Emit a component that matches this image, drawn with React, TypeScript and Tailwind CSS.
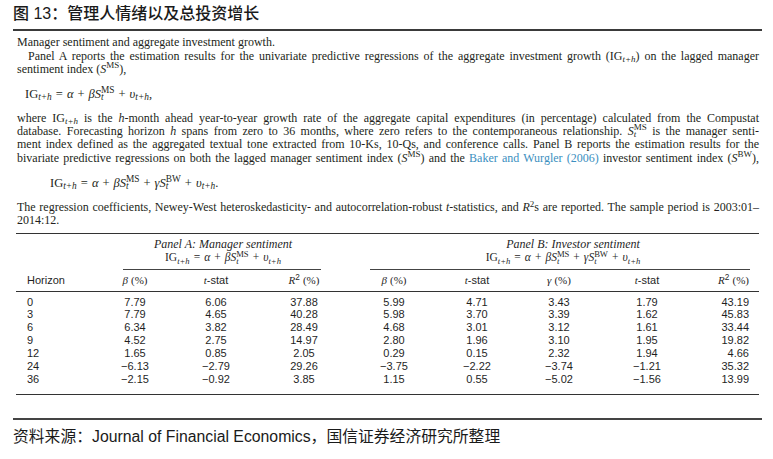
import React from "react";

const serif = "font-['Liberation_Serif','DejaVu_Serif',serif]";
const sans = "font-['Liberation_Sans',Arial,sans-serif]";
const cjk = "font-['Liberation_Sans','Noto_Sans_CJK_SC',sans-serif]";

// stacked sub + sup after a symbol, e.g. S_t^MS
function SupSub({ sup, sub }: { sup: string; sub: string }) {
  return (
    <>
      <span className="inline-block w-0">
        <sub className="italic">{sub}</sub>
      </span>
      <sup>{sup}</sup>
    </>
  );
}

const Op = ({ c }: { c: string }) => <span className="mx-[4px]">{c}</span>;

const IG = () => (
  <>
    IG<sub className="italic">t+h</sub>
  </>
);

function Eq({ bw = false, end = "" }: { bw?: boolean; end?: string }) {
  return (
    <span className="whitespace-nowrap">
      <IG />
      <Op c="=" />
      <i>α</i>
      <Op c="+" />
      <i>β</i>
      <i>S</i>
      <SupSub sup="MS" sub="t" />
      {bw && (
        <>
          <Op c="+" />
          <i>γ</i>
          <i>S</i>
          <SupSub sup="BW" sub="t" />
        </>
      )}
      <Op c="+" />
      <i>υ</i>
      <sub className="italic">t+h</sub>
      {end}
    </span>
  );
}

const Line = ({ children, full = true, className = "" }: { children: React.ReactNode; full?: boolean; className?: string }) => (
  <div
    className={`h-[13.3px] leading-[13.3px] whitespace-nowrap ${full ? "text-justify [text-align-last:justify]" : "text-left"} ${className}`}
  >
    {children}
  </div>
);

const rows = [
  ["0", "7.79", "6.06", "37.88", "5.99", "4.71", "3.43", "1.79", "43.19"],
  ["3", "7.79", "4.65", "40.28", "5.98", "3.70", "3.39", "1.62", "45.83"],
  ["6", "6.34", "3.82", "28.49", "4.68", "3.01", "3.12", "1.61", "33.44"],
  ["9", "4.52", "2.75", "14.97", "2.80", "1.96", "3.10", "1.95", "19.82"],
  ["12", "1.65", "0.85", "2.05", "0.29", "0.15", "2.32", "1.94", "4.66"],
  ["24", "−6.13", "−2.79", "29.26", "−3.75", "−2.22", "−3.74", "−1.21", "35.32"],
  ["36", "−2.15", "−0.92", "3.85", "1.15", "0.55", "−5.02", "−1.56", "13.99"],
];

const cols = "grid grid-cols-[96px_46px_116px_60px_120px_46px_118px_58px_83px]";

function cellAlign(i: number) {
  if (i === 0) return "text-left pl-[11px]";
  if (i === 8) return "text-right pr-[10px]";
  return "text-center";
}

const Gk = ({ c }: { c: string }) => <i className={serif}>{c}</i>;

const headers: React.ReactNode[] = [
  "Horizon",
  <><Gk c="β" /> <span className={serif}>(%)</span></>,
  <><Gk c="t" />-stat</>,
  <><Gk c="R" /><sup>2</sup> <span className={serif}>(%)</span></>,
  <><Gk c="β" /> <span className={serif}>(%)</span></>,
  <><Gk c="t" />-stat</>,
  <><Gk c="γ" /> <span className={serif}>(%)</span></>,
  <><Gk c="t" />-stat</>,
  <><Gk c="R" /><sup>2</sup> <span className={serif}>(%)</span></>,
];

export default function App() {
  return (
    <div className="w-[773px] h-[459px] bg-white overflow-hidden text-[#231f20]">
      {/* title */}
      <div className="pl-[13px] pr-[11px] pt-[5px]">
        <div className={`${cjk} h-[18px] leading-[18px] text-[16px] font-medium text-[#1a1a1a]`}>
          图 13：管理人情绪以及总投资增长
        </div>
        <div className="mt-[6px] h-[2px] bg-[#3a3a3a]" />
      </div>

      {/* caption */}
      <div className={`${serif} ml-[17px] w-[742px] mt-[5.4px] text-[12px]`}>
        <Line full={false}>Manager sentiment and aggregate investment growth.</Line>
        <Line className="pl-[11px]">
          Panel A reports the estimation results for the univariate predictive regressions of the aggregate investment growth (<IG />) on the lagged manager
        </Line>
        <Line full={false}>
          sentiment index (<i>S</i>
          <sup>MS</sup>),
        </Line>
        <div className="h-[35.4px] flex items-center pl-[8px] text-[12.5px]">
          <Eq end="," />
        </div>
        <Line>
          where <IG /> is the <i>h</i>-month ahead year-to-year growth rate of the aggregate capital expenditures (in percentage) calculated from the Compustat
        </Line>
        <Line>
          database. Forecasting horizon <i>h</i> spans from zero to 36 months, where zero refers to the contemporaneous relationship. <i>S</i>
          <SupSub sup="MS" sub="t" /> is the manager senti-
        </Line>
        <Line>
          ment index defined as the aggregated textual tone extracted from 10-Ks, 10-Qs, and conference calls. Panel B reports the estimation results for the
        </Line>
        <Line>
          bivariate predictive regressions on both the lagged manager sentiment index (<i>S</i>
          <sup>MS</sup>) and the <span className="text-[#3b8fc0]">Baker and Wurgler (2006)</span> investor sentiment index (<i>S</i>
          <sup>BW</sup>),
        </Line>
        <div className="h-[36.2px] flex items-center pl-[33px] text-[12.5px]">
          <Eq bw end="." />
        </div>
        <Line>
          The regression coefficients, Newey-West heteroskedasticity- and autocorrelation-robust <i>t</i>-statistics, and <i>R</i>
          <sup>2</sup>s are reported. The sample period is 2003:01–
        </Line>
        <Line full={false}>2014:12.</Line>
      </div>

      {/* table */}
      <div className={`${sans} ml-[16px] w-[743px] mt-[5.3px] text-[11px] text-[#1f1f1f]`}>
        <div className="h-px bg-[#333]" />
        <div className={cols}>
          <div className="col-start-2 col-span-3 pt-[4.5px]">
            <div className={`${serif} italic text-center h-[13px] leading-[13px] text-[12px]`}>Panel A: Manager sentiment</div>
            <div className={`${serif} text-center h-[13px] leading-[13px] text-[11.5px]`}>
              <Eq />
            </div>
            <div className="mt-[4.5px] ml-[11px] mr-[13px] h-px bg-[#444]" />
          </div>
          <div className="col-start-5 col-span-5 pt-[4.5px] pl-[36px] pr-[9px]">
            <div className={`${serif} italic text-center h-[13px] leading-[13px] text-[12px] pl-[26px]`}>Panel B: Investor sentiment</div>
            <div className={`${serif} text-center h-[13px] leading-[13px] text-[11.5px] pl-[6px]`}>
              <Eq bw />
            </div>
            <div className="mt-[4.5px] h-px bg-[#444]" />
          </div>
          {headers.map((h, i) => (
            <div key={i} className={`h-[21px] leading-[21px] ${cellAlign(i)}`}>
              {h}
            </div>
          ))}
        </div>
        <div className="h-px bg-[#333]" />
        <div className={`${cols} pt-[3.6px] pb-[8.6px]`}>
          {rows.map((r) =>
            r.map((v, i) => (
              <div key={r[0] + "-" + i} className={`h-[12.83px] leading-[12.83px] ${cellAlign(i)}`}>
                {v}
              </div>
            ))
          )}
        </div>
        <div className="h-px bg-[#333]" />
      </div>

      {/* source */}
      <div className="pl-[13px] pr-[11px] mt-[23px]">
        <div className="h-[2px] bg-[#444]" />
        <div className={`${cjk} mt-[8px] h-[18px] leading-[18px] text-[15.8px] text-[#1a1a1a]`}>
          资料来源：Journal of Financial Economics，国信证券经济研究所整理
        </div>
      </div>
    </div>
  );
}
